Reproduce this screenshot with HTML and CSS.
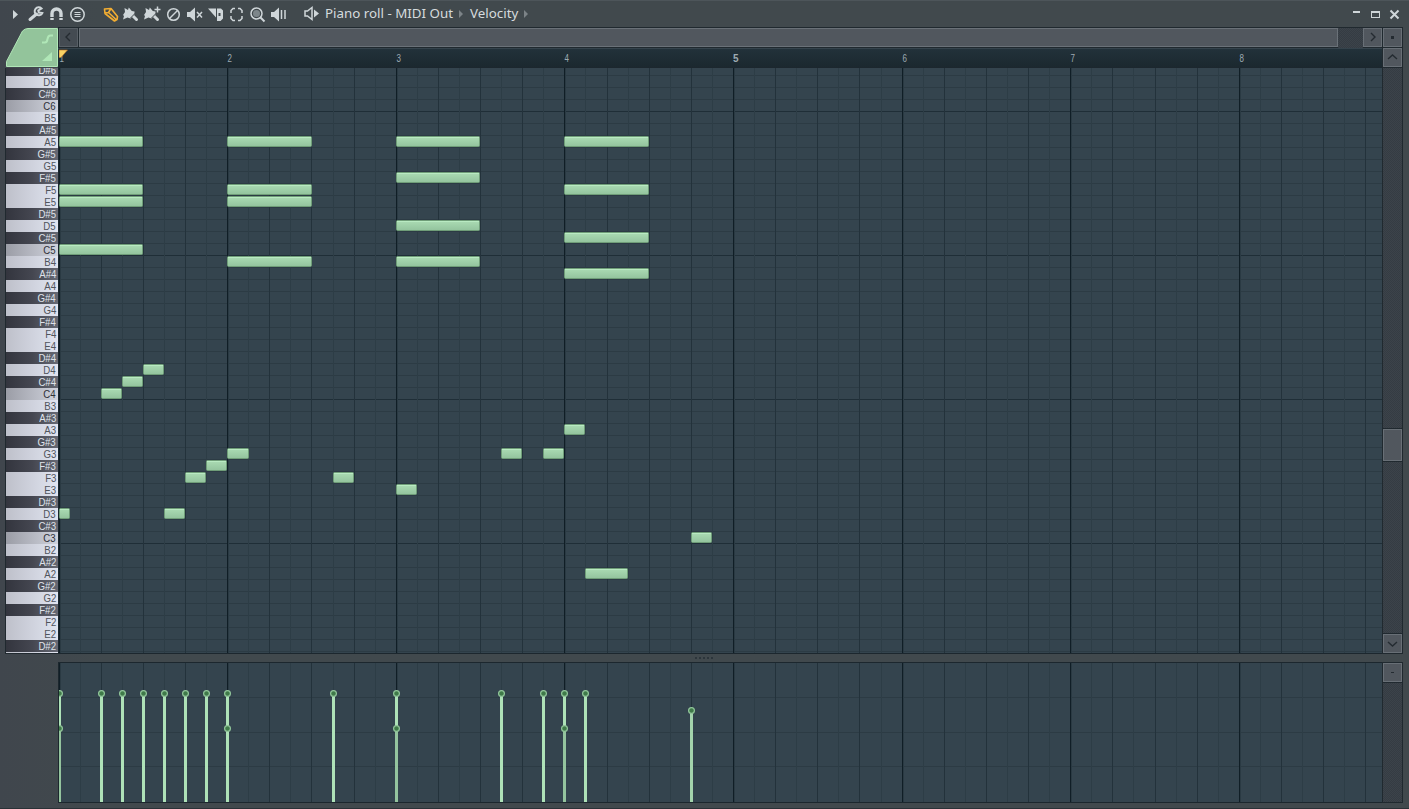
FILE: index.html
```html
<!DOCTYPE html>
<html lang="en">
	<head>
		<meta charset="utf-8">
		<title>Piano roll</title>
		<link rel="stylesheet" href="styles.css">
	</head>
	<body>
		<div class="window">
			<header class="toolbar">
				<svg class="tools" width="300" height="27" viewBox="0 0 300 27">
					<path class="fill" d="M13 10l5 4.500-5 4.500z"/>
					<!-- wrench -->
					<path class="wrench" d="M30 19.500l6.500-5.500"/>
					<path class="line thick" d="M41.500 8.500a4 4 0 1 0 .8 4.500l-3.500-.5-.5-2z"/>
					<!-- magnet -->
					<path class="magnet" d="M52 20v-6.500a4.500 4.500 0 0 1 9 0V20"/>
					<path class="cut" d="M50 17.500h13"/>
					<!-- menu -->
					<circle class="line" cx="77.500" cy="14.500" r="6.700"/>
					<path class="line thin" d="M74.500 12.500h6M74.500 14.500h6M74.500 16.500h6"/>
					<!-- pencil -->
					<path class="pencil" d="M104.500 9l6.500-.5 6.500 8-.5 3-2.500 1.500-9.500-7.500zM105 13l3.500-.5 2.500-4M108.500 12.500l7.500 7"/>
					<!-- brushes -->
					<g id="brush">
						<path class="fill" d="M124.500 8l3.500 2 .8-2.500 3 3.500 2.700.5v3l-4 4-3-1-4.500 2 1-3.500-1-1 2-3z"/>
						<path class="line handle" d="M133 16l3.500 3.500"/>
						<path class="gap" d="M135.500 13l-5 5"/>
					</g>
					<use href="#brush" x="21"/>
					<path class="line" d="M157.500 6.500v6M154.500 9.500h6"/>
					<!-- mute circle -->
					<circle class="line" cx="173.500" cy="14.500" r="5.800"/>
					<path class="line" d="M169.500 18.500l8-8"/>
					<!-- speaker off -->
					<path class="fill" d="M187 12h3l5-4.500v14l-5-4.500h-3z"/>
					<path class="line" d="M197 12l5 5.500m0-5.500l-5 5.500"/>
					<!-- slice -->
					<path class="fill" d="M208 8.500h8v9zM217 8.500h4l2 2v8l-2.500 2.500h-3.500zM218.500 13v3h2v-3z" fill-rule="evenodd"/>
					<!-- select -->
					<path class="line" d="M231 13v-2.500l2-2h2M238 8.500h2l2 2V13M242 16v2.500l-2 2h-2M235 20.500h-2l-2-2V16"/>
					<!-- zoom -->
					<circle class="line" cx="256.500" cy="13.500" r="5.500"/>
					<circle class="lens" cx="256.500" cy="13.500" r="3.500"/>
					<path class="line thick" d="M260.500 17.500l4 4"/>
					<!-- playback -->
					<path class="fill" d="M271 12h3l5-4.500v14l-5-4.500h-3z"/>
					<path class="line" d="M281.500 10v9M285 10v9"/>
				</svg>
				<div class="title">
					<svg width="17" height="17" viewBox="0 0 17 17"><path class="line" d="M2 6h2.500L9 2.500v12L4.500 11H2z"/><path class="fill" d="M11 4.500l5 4-5 4z"/></svg>
					<span class="name">Piano roll - MIDI Out</span><i class="arrow"></i>
					<span class="name velocity">Velocity</span><i class="arrow"></i>
				</div>
				<svg class="win-buttons" width="56" height="27" viewBox="0 0 56 27">
					<path class="fill" d="M3 11h7v2H3z"/>
					<path class="fill" d="M21 11h9v7h-9zm1 2v4h7v-4z" fill-rule="evenodd"/>
					<path class="line thick" d="M40.500 10.500l8 8m0-8l-8 8"/>
				</svg>
			</header>
			<main class="editor">
				<div class="left">
					<svg class="corner" width="54" height="41" viewBox="0 0 54 41">
						<path class="corner-shape" d="M1.500 39.500v-5L17.500 4Q20 1.500 23 1.500h29.500v38z"/>
						<path class="corner-mark" d="M37 15.500h3q2 0 2.500-3.500t3-3.500h2.500"/>
						<path class="corner-fill" d="M37 34l10-9v9z"/>
					</svg>
					<div class="keys" id="keys"></div>
				</div>
				<div class="center">
					<div class="hscroll">
						<button class="sbtn"><svg width="18" height="18"><path d="M11 5l-4 4 4 4"/></svg></button>
						<div class="hthumb"></div>
						<div class="track"></div>
						<button class="sbtn"><svg width="18" height="18"><path d="M8 5l4 4-4 4"/></svg></button>
					</div>
					<div class="ruler" id="ruler">
						<svg class="marker" width="10" height="11"><path d="M0 1h8.500L2 8.500H0z"/></svg>
					</div>
					<div class="roll"><svg id="grid" width="1323" height="585"></svg></div>
				</div>
				<div class="vscroll">
					<button class="sbtn"><svg width="18" height="18"><path d="M8 8h3v3H8z" class="dot"/></svg></button>
					<button class="sbtn"><svg width="18" height="18"><path d="M5 11l4.500-4 4.500 4"/></svg></button>
					<div class="track upper"></div>
					<div class="vthumb"></div>
					<div class="track"></div>
					<button class="sbtn"><svg width="18" height="18"><path d="M5 8l4.500 4L14 8"/></svg></button>
				</div>
			</main>
			<div class="splitter"><i></i><i></i><i></i><i></i><i></i></div>
			<section class="events">
				<div class="lane"><svg id="lane" width="1323" height="139"></svg></div>
				<div class="vscroll small">
					<button class="sbtn"><svg width="18" height="18"><path d="M8 9h3v1H8z" class="dot"/></svg></button>
					<div class="track"></div>
				</div>
			</section>
		</div>
		<script src="script.js"></script>
	</body>
</html>
```
FILE: styles.css
```css
*{
	box-sizing: border-box;
}
body{
	margin: 0;
	overflow: hidden;
	background-color: #41484d;
	font-family: "Noto Sans", "Open Sans", sans-serif;
}
.window{
	display: flex;
	flex-direction: column;
	width: 1409px;
	height: 809px;
	border-top: 1px solid #4d555a;
	border-bottom: 1px solid #2a3237;
	background: linear-gradient(90deg, #40464d, #41494d 100px);
}
.toolbar{
	display: flex;
	flex: none;
	height: 26px;
}
.tools, .title, .win-buttons{
	margin-top: -1px;
}
.fill{
	fill: #cfd6d9;
}
.line{
	fill: none;
	stroke: #cfd6d9;
	stroke-width: 1.5;
}
.thin{
	stroke-width: 1;
}
.thick{
	stroke-width: 2;
}
.handle{
	stroke-width: 3;
	stroke-linecap: round;
}
.gap{
	stroke: #41494d;
}
.lens{
	fill: #7d868a;
}
.wrench{
	stroke: #cfd6d9;
	stroke-width: 3;
	stroke-linecap: round;
}
.magnet{
	fill: none;
	stroke: #cfd6d9;
	stroke-width: 3.4;
}
.cut{
	stroke: #41494d;
}
.pencil{
	fill: none;
	stroke: #f2ad32;
	stroke-width: 1.6;
	stroke-linejoin: round;
}
.title{
	display: flex;
	align-items: center;
	height: 27px;
	padding-left: 3px;
	color: #d5dbde;
	font-size: 13.35px;
	white-space: nowrap;
}
.name{
	width: 129px;
	margin: -1px 0 0 5px;
}
.velocity{
	width: 49px;
	margin-left: 7px;
}
.arrow{
	margin-left: 5px;
	border: solid transparent;
	border-width: 4px 0 4px 4px;
	border-left-color: #7c8387;
}
.win-buttons{
	margin-left: auto;
	margin-right: 3px;
}
.editor{
	display: flex;
	flex: none;
	height: 627px;
	padding-left: 5px;
}
.left{
	display: flex;
	flex-direction: column;
	width: 53px;
}
.corner{
	flex: none;
}
.corner-shape{
	fill: #93c49b;
	stroke: #b0e7b7;
}
.corner-mark{
	fill: none;
	stroke: #b0e7b7;
	stroke-width: 2;
}
.corner-fill{
	fill: #b0e7b7;
}
.keys{
	display: flex;
	flex: 1;
	flex-direction: column;
	justify-content: flex-end;
	overflow: hidden;
	border: solid #20292f;
	border-width: 0 0 1px 1px;
}
.key{
	flex: none;
	height: 12px;
	padding-right: 2px;
	background: linear-gradient(90deg, #bec0ca, #e0e4f0);
	color: #50545c;
	font: 11.5px/13px "Liberation Sans", sans-serif;
	text-align: right;
}
.key span{
	display: inline-block;
	transform: scaleX(.84);
	transform-origin: right;
}
.key.black{
	background: linear-gradient(90deg, #33353e, #444650 50%, #666974);
	color: #dfe2ea;
}
.key.root{
	background: linear-gradient(90deg, #9b9da6, #cfd2dc);
	color: #2e3238;
}
.key.cropped{
	height: 1px;
}
.center{
	display: flex;
	flex-direction: column;
	width: 1324px;
}
.hscroll{
	display: flex;
	height: 21px;
	padding: 1px 0 0 1px;
	background-color: #20292f;
}
.sbtn{
	display: flex;
	flex: none;
	width: 19px;
	height: 19px;
	padding: 0;
	border: 1px solid #686f76;
	background-color: #51575e;
}
.sbtn svg{
	flex: none;
	margin: -1px;
}
.sbtn path{
	fill: none;
	stroke: #242b31;
	stroke-width: 1.4;
}
.sbtn .dot{
	fill: #242b31;
	stroke: none;
}
.hscroll .sbtn:first-child{
	border-color: #585f66;
	background-color: #444b52;
}
.hthumb{
	width: 1259px;
	height: 19px;
	margin-left: 1px;
	border: 1px solid #6a7178;
	background-color: #51575e;
}
.track{
	flex: 1;
	background: repeating-conic-gradient(#353c43 0 25%, #3c434a 0 50%) 0 0 / 2px 2px;
}
.ruler{
	position: relative;
	display: flex;
	height: 19px;
	border-top: 1px solid #35434c;
	background: linear-gradient(#22313a, #1b282f);
	color: #9eabb2;
	font: 10px/20px "Liberation Sans", sans-serif;
}
.bar-number{
	position: absolute;
	transform: scaleX(.8);
}
.bar-number.strong{
	font-weight: bold;
	transform: none;
}
.marker{
	position: absolute;
	left: 1px;
	top: 0;
	z-index: 1;
}
.marker path{
	fill: #f8d264;
	stroke: #b86d26;
	stroke-width: .6;
}
.roll{
	height: 587px;
	border: solid #1c272e;
	border-width: 1px 0 1px 1px;
}
.roll svg, .lane svg{
	display: block;
	background-color: #34444e;
}
.vscroll{
	display: flex;
	flex-direction: column;
	gap: 1px;
	width: 21px;
	padding: 1px;
	background-color: #20292f;
}
.track.upper{
	flex: none;
	height: 360px;
}
.vthumb{
	height: 32px;
	border: 1px solid #686f76;
	background-color: #51575e;
}
.splitter{
	display: flex;
	flex: none;
	gap: 2px;
	height: 8px;
	padding: 3px 0 0 695px;
}
.splitter i{
	width: 2px;
	height: 2px;
	background-color: #2c353b;
}
.events{
	display: flex;
	flex: none;
	height: 141px;
	padding-left: 58px;
}
.lane{
	width: 1324px;
	border: solid #1c272e;
	border-width: 1px 0 1px 1px;
}
.note{
	fill: url(#noteFill);
	stroke: #6f9d78;
}
.shine{
	fill: #b9eac2;
}
.head{
	fill: #3f7a49;
	stroke: #93c79c;
	stroke-width: 1.2;
}
```
FILE: script.js
```js
let names = ["C", "C#", "D", "D#", "E", "F", "F#", "G", "G#", "A", "A#", "B"];
let keys = document.getElementById("keys");
let ruler = document.getElementById("ruler");
let grid = document.getElementById("grid");
let lane = document.getElementById("lane");
let step = 21.077;
let topKey = 75;

function stepX(k){
	return Math.floor(k * step + .001);
}
// D#6 is the first visible row, 8px of it shows
function keyTop(midi){
	return (topKey - midi) * 12 - 4;
}
function pitch(name){
	return names.indexOf(name.slice(0, -1)) + Number(name.slice(-1)) * 12;
}
function rect(x, y, w, h, fill){
	return `<rect x="${x}" y="${y}" width="${w}" height="${h}" fill="${fill}"/>`;
}

for(let m = topKey; m >= 27; m--){
	let name = names[m % 12];
	let key = document.createElement("div");
	key.className = "key" + (name.length > 1 ? " black" : "") + (name === "C" ? " root" : "");
	key.innerHTML = "<span>" + name + Math.floor(m / 12) + "</span>";
	keys.appendChild(key);
}
let last = document.createElement("div");
last.className = "key cropped";
keys.appendChild(last);

function columns(height){
	let out = "";
	for(let k = 0; k < 63; k++){
		let color = k % 8 === 0 ? "#101e26" : k % 2 === 0 ? "#23323b" : "#2d3d46";
		out += rect(stepX(k), 0, 1, height, color);
		if(k % 8 === 0){
			out += rect(stepX(k) + 1, 0, 1, height, "#2a3a43");
		}
	}
	return out;
}

let rows = "";
for(let m = topKey; m >= 27; m--){
	rows += rect(0, keyTop(m) + 11, 1323, 1, m % 12 === 0 ? "#1f2e37" : "#2c3b44");
}

// start step, length in steps, key
let notes = [
	[0, 4, "A5"], [0, 4, "F5"], [0, 4, "E5"], [0, 4, "C5"],
	[8, 4, "A5"], [8, 4, "F5"], [8, 4, "E5"], [8, 4, "B4"],
	[16, 4, "A5"], [16, 4, "F#5"], [16, 4, "D5"], [16, 4, "B4"],
	[24, 4, "A5"], [24, 4, "F5"], [24, 4, "C#5"], [24, 4, "A#4"],
	[0, .55, "D3"], [2, 1, "C4"], [3, 1, "C#4"], [4, 1, "D4"],
	[5, 1, "D3"], [6, 1, "F3"], [7, 1, "F#3"], [8, 1.05, "G3"],
	[13, 1, "F3"], [16, 1, "E3"], [21, 1, "G3"], [23, 1, "G3"],
	[24, 1, "A3"], [25, 2, "A2"], [30, 1, "C3"]
];
let drawn = "";
for(let [start, length, name] of notes){
	let x = stepX(start);
	let w = stepX(start + length) - x;
	if(start === 8 && length === 4){
		w = 85;
	}
	let y = keyTop(pitch(name));
	drawn += `<rect class="note" x="${x + .5}" y="${y + .5}" width="${w - 1}" height="10" rx="1"/>`;
	drawn += `<rect class="shine" x="${x + 1}" y="${y + 1}" width="${w - 2}" height="1"/>`;
}
grid.innerHTML = '<defs><linearGradient id="noteFill" x2="0" y2="1"><stop stop-color="#abdcb4"/><stop offset="1" stop-color="#93c39d"/></linearGradient></defs>'
	+ rows + columns(585) + drawn;

let stems = [[0, 30], [2, 30], [3, 30], [4, 30], [5, 30], [6, 30], [7, 30], [8, 30], [13, 30], [16, 30], [21, 30], [23, 30], [24, 30], [25, 30], [30, 47], [0, 65], [8, 65], [16, 65], [24, 65]];
let events = "";
for(let [k, y] of stems){
	let x = stepX(k);
	let color = y === 30 || k === 8 ? "#aee2b8" : y === 47 ? "#a3d4ac" : "#94c49e";
	events += rect(x - 1, y, 3, 139 - y, color);
	events += `<circle class="head" cx="${x + .5}" cy="${y + .5}" r="2.9"/>`;
}
lane.innerHTML = rect(0, 34, 1323, 1, "#2c3b44") + rect(0, 69, 1323, 1, "#2c3b44") + rect(0, 103, 1323, 1, "#2c3b44") + columns(139) + events;

for(let i = 0; i < 8; i++){
	let label = document.createElement("span");
	label.className = "bar-number" + (i === 4 ? " strong" : "");
	label.style.left = stepX(i * 8) + 1 + "px";
	label.textContent = i + 1;
	ruler.appendChild(label);
}
```
